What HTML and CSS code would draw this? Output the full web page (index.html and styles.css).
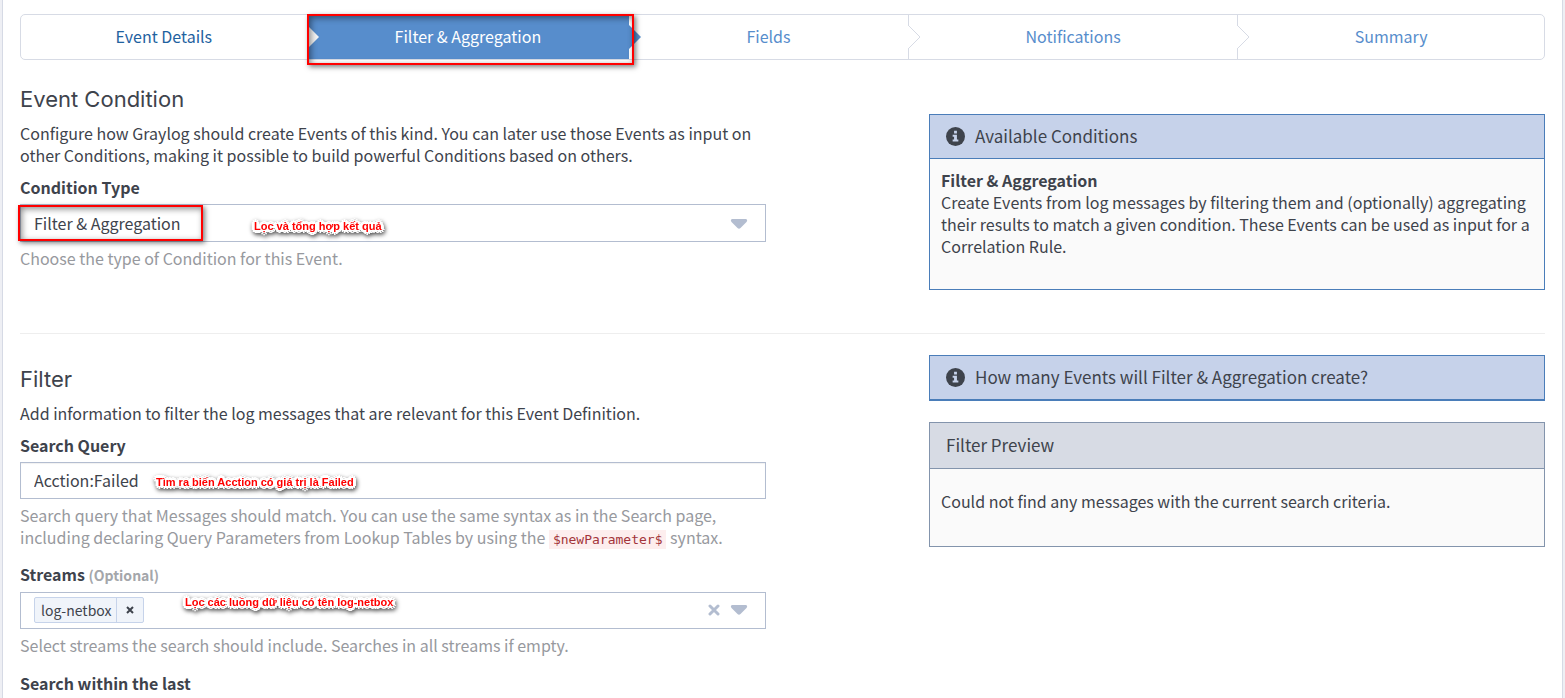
FILE: index.html
```html
<!DOCTYPE html>
<html lang="en">
<head>
<meta charset="utf-8">
<meta name="viewport" content="width=device-width, initial-scale=1">
<title>Event Definition</title>
<link rel="stylesheet" href="styles.css">
</head>
<body>
<main class="card">
  <nav class="wizard" aria-label="Event definition steps">
    <button type="button" class="step visited">Event Details</button>
    <button type="button" class="step active" aria-current="step">
      <svg class="arrow" viewBox="0 0 13 24"><path class="arrow-fill" d="M0 0L12 12L0 24z"/></svg>
      Filter &amp; Aggregation
      <span class="mark mark-step"></span>
    </button>
    <button type="button" class="step">
      <svg class="arrow arrow-blue" viewBox="0 0 13 24"><path class="arrow-fill" d="M0 0L12 12L0 24z"/></svg>
      Fields
    </button>
    <button type="button" class="step divided">
      <svg class="arrow" viewBox="0 0 13 24"><path class="arrow-fill" d="M0 0L12 12L0 24z"/><path class="arrow-line" d="M0 0L12 12L0 24"/></svg>
      Notifications
    </button>
    <button type="button" class="step divided">
      <svg class="arrow" viewBox="0 0 13 24"><path class="arrow-fill" d="M0 0L12 12L0 24z"/><path class="arrow-line" d="M0 0L12 12L0 24"/></svg>
      Summary
    </button>
  </nav>

  <section class="row condition">
    <div class="form">
      <h2>Event Condition</h2>
      <p class="intro">Configure how Graylog should create Events of this kind. You can later use those Events as input on other Conditions, making it possible to build powerful Conditions based on others.</p>
      <label class="label" for="condition-type">Condition Type</label>
      <div class="control">
        <select id="condition-type" class="field select"><option>Filter &amp; Aggregation</option></select>
        <svg class="caret caret-over" viewBox="0 0 18 12"><path d="M2 1H16Q18 2 16.500 4L10.500 10Q9 11.500 7.500 10L1.500 4Q0 2 2 1z"/></svg>
        <span class="mark mark-select"></span>
        <span class="note note-type">Lọc và tổng hợp kết quả</span>
      </div>
      <p class="help">Choose the type of Condition for this Event.</p>
    </div>
    <aside class="side">
      <section class="panel info">
        <h3 class="panel-title"><svg class="info-icon" viewBox="0 0 20 20"><circle cx="10" cy="10" r="10"/><path d="M8.500 4h3v2.800h-3zM7 8.200h4.500v5H13v2H7v-2h1.500v-3H7z"/></svg>Available Conditions</h3>
        <div class="panel-body">
          <strong>Filter &amp; Aggregation</strong>
          <p>Create Events from log messages by filtering them and (optionally) aggregating their results to match a given condition. These Events can be used as input for a Correlation Rule.</p>
        </div>
      </section>
    </aside>
  </section>

  <hr>

  <section class="row filter">
    <div class="form">
      <h2>Filter</h2>
      <p class="intro">Add information to filter the log messages that are relevant for this Event Definition.</p>
      <label class="label" for="query">Search Query</label>
      <div class="control">
        <input id="query" class="field" type="text" value="Acction:Failed">
        <span class="note note-query">Tìm ra biến Acction có giá trị là Failed</span>
      </div>
      <p class="help help-query">Search query that Messages should match. You can use the same syntax as in the Search page, including declaring Query Parameters from Lookup Tables by using the <code>$newParameter$</code> syntax.</p>
      <label class="label" for="streams">Streams <small>(Optional)</small></label>
      <div class="control">
        <div class="field multi">
          <span class="tag"><span class="tag-name">log-netbox</span><button type="button" class="tag-remove" aria-label="Remove log-netbox"><svg viewBox="0 0 10 10"><path d="M2 2L8 8M8 2L2 8"/></svg></button></span>
          <input id="streams" class="stream-input" type="text">
          <button type="button" class="clear" aria-label="Clear streams"><svg viewBox="0 0 12 12"><path d="M2 2L10 10M10 2L2 10"/></svg></button>
          <svg class="caret" viewBox="0 0 18 12"><path d="M2 1H16Q18 2 16.500 4L10.500 10Q9 11.500 7.500 10L1.500 4Q0 2 2 1z"/></svg>
        </div>
        <span class="note note-streams">Lọc các luồng dữ liệu có tên log-netbox</span>
      </div>
      <p class="help help-streams">Select streams the search should include. Searches in all streams if empty.</p>
      <div class="label">Search within the last</div>
    </div>
    <aside class="side">
      <section class="panel info collapsed">
        <h3 class="panel-title"><svg class="info-icon" viewBox="0 0 20 20"><circle cx="10" cy="10" r="10"/><path d="M8.500 4h3v2.800h-3zM7 8.200h4.500v5H13v2H7v-2h1.500v-3H7z"/></svg>How many Events will Filter &amp; Aggregation create?</h3>
      </section>
      <section class="panel preview">
        <h3 class="panel-title">Filter Preview</h3>
        <div class="panel-body"><p>Could not find any messages with the current search criteria.</p></div>
      </section>
    </aside>
  </section>
</main>
</body>
</html>
```
FILE: styles.css
```css
* { box-sizing: border-box; }

body {
  margin: 0;
  background: #eeeff4;
  color: #3e434c;
  font: 16px/22px "Noto Sans CJK SC", "Noto Sans", sans-serif;
}

h2, h3, p { margin: 0; font-weight: 400; }
button, input, select { font: inherit; color: inherit; }

.card {
  min-height: 100vh;
  margin: 0 2px;
  padding: 14px 17px 0;
  background: #fff;
  border: solid #d6dae5;
  border-width: 0 1px;
}

/* Step navigation */
.wizard {
  display: grid;
  grid-template-columns: 286fr 323fr 279fr 330fr 307fr;
  height: 46px;
  border: 1px solid #d7dbe5;
  border-radius: 5px;
}
.step {
  position: relative;
  padding: 0 0 2px;
  border: 0;
  background: none;
  color: #578dcc;
}
.visited { color: #1f629f; }
.active { background: #578dcc; color: #fff; }
.divided { border-left: 1px solid #d7dbe5; }
.arrow {
  position: absolute;
  top: 10px;
  left: 0;
  width: 13px;
  height: 24px;
}
.divided .arrow { left: -1px; }
.arrow-fill { fill: #fff; }
.active .arrow-fill { fill: #f4f4f4; }
.arrow-blue .arrow-fill { fill: #578dcc; }
.arrow-line { fill: none; stroke: #d7dbe5; }

/* Annotation overlays */
.mark {
  position: absolute;
  z-index: 2;
  border: 2px solid #f00;
  box-shadow: 2px 2px 5px rgba(0, 0, 0, .5), inset 2px 2px 6px rgba(0, 0, 0, .45);
  pointer-events: none;
}
.mark-step { inset: -1px -5px -6px 0; }
.mark-select { left: -2px; top: 1px; width: 185px; height: 36px; }
.note {
  position: absolute;
  font: bold 11px/14px "Liberation Sans", Arial, sans-serif;
  color: #f00;
  white-space: nowrap;
  text-shadow:
    3px 0 #fff, -3px 0 #fff, 0 3px #fff, 0 -3px #fff,
    2px 2px #fff, -2px 2px #fff, 2px -2px #fff, -2px -2px #fff,
    1px 1px #fff, -1px 1px #fff, 1px -1px #fff, -1px -1px #fff;
  filter: drop-shadow(1px 2px 2px rgba(0, 0, 0, .7));
  pointer-events: none;
}
.note-type { left: 234px; top: 15px; }
.note-query { left: 136px; top: 13px; }
.note-streams { left: 165px; top: 3px; }

/* Two-column rows */
.row {
  display: grid;
  grid-template-columns: 746fr 616fr;
  column-gap: 163px;
}
.condition { padding-top: 24px; }
.condition .side { padding-top: 30px; }
.filter { padding-top: 21px; }
.filter .form { padding-top: 9px; }
hr {
  height: 1px;
  margin: 43px 0 0;
  border: 0;
  background: #eee;
}

h2 { font: 400 22px/30px Inter, sans-serif; }
.intro { margin-top: 8px; }
.label {
  display: block;
  margin: 10px 0 6px;
  font-weight: 700;
}
.label small { font-size: 14px; color: #a4a6aa; }
.control { position: relative; }
.field {
  display: block;
  width: 100%;
  height: 37px;
  padding: 0 13px 1px;
  border: 1px solid #b3bdd0;
  border-radius: 0;
  background: #fff;
  box-shadow: inset 0 1px 1px rgba(0, 0, 0, .06);
}
.select { height: 38px; appearance: none; box-shadow: none; }
.caret { width: 18px; height: 12px; fill: #b3bdd0; }
.caret-over { position: absolute; right: 18px; top: 14px; pointer-events: none; }
.help { margin-top: 5px; color: #97999e; }
.help-query { margin-bottom: 15px; }
.help-streams { margin-bottom: 16px; }
code {
  padding: 2px 4px;
  background: #fdeeee;
  color: #a3343a;
  font: 13px/16px "DejaVu Sans Mono", monospace;
}

.multi {
  display: flex;
  align-items: center;
  padding-right: 17px;
  box-shadow: none;
}
.tag {
  display: flex;
  height: 26px;
  border: 1px solid #c6d3ea;
  border-radius: 2px;
  background: #f0f4fa;
  font-size: 14px;
  line-height: 24px;
}
.tag-name { padding: 0 5px 0 6px; }
.tag-remove {
  width: 27px;
  padding: 0;
  border: 0;
  border-left: 1px solid #c6d3ea;
  background: none;
}
.tag-remove svg { display: block; width: 10px; height: 10px; margin: auto; }
.tag-remove path { stroke: #3e434c; stroke-width: 2; }
.stream-input { flex: 1; min-width: 0; border: 0; background: none; outline: 0; }
.clear { width: 12px; height: 12px; margin-right: 10px; padding: 0; border: 0; background: none; }
.clear svg { display: block; width: 12px; height: 12px; }
.clear path { stroke: #b3bdd0; stroke-width: 3; stroke-linecap: round; }

/* Side panels */
.panel { border: 1px solid #4a7db9; background: #fafafa; }
.panel-title {
  display: flex;
  align-items: center;
  gap: 10px;
  height: 44px;
  padding: 0 16px 1px;
  border-bottom: 1px solid #4a7db9;
  background: #c6d2ea;
  font-size: 17px;
}
.info-icon { width: 19px; height: 19px; fill: #3e434c; }
.info-icon path { fill: #c6d2ea; }
.panel-body { padding: 10px 11px 32px; }
.preview { margin-top: 21px; border-color: #8394ac; }
.preview .panel-title { height: 46px; background: #d7dbe4; border-color: #8394ac; }
.preview .panel-body { padding: 21px 11px 34px; }
```
